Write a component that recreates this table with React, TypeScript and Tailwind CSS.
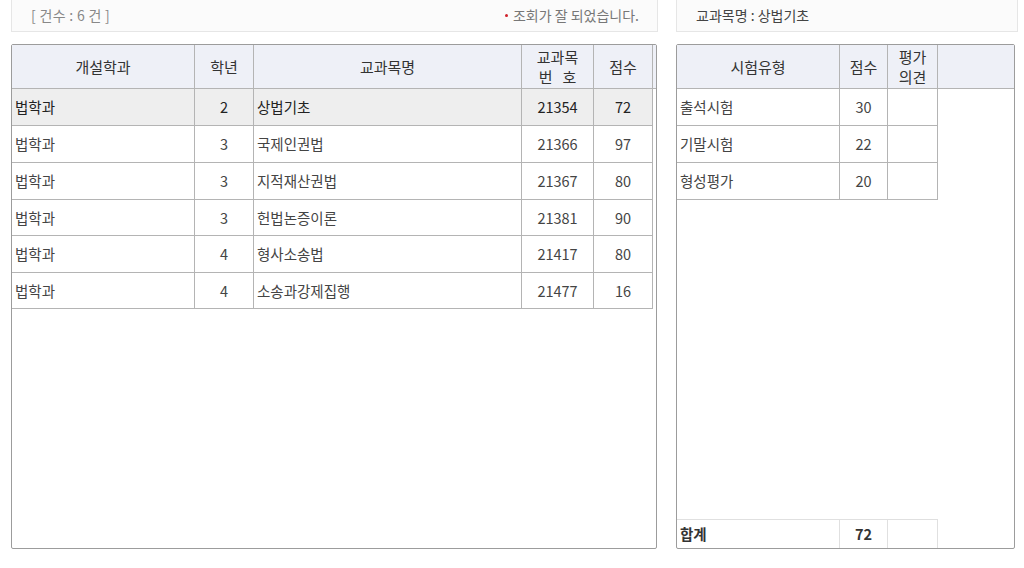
import React from "react";

const rows = [
  { dept: "법학과", grade: "2", name: "상법기초", code: "21354", score: "72", h: "h-[37px]" },
  { dept: "법학과", grade: "3", name: "국제인권법", code: "21366", score: "97", h: "h-[37px]" },
  { dept: "법학과", grade: "3", name: "지적재산권법", code: "21367", score: "80", h: "h-[37px]" },
  { dept: "법학과", grade: "3", name: "헌법논증이론", code: "21381", score: "90", h: "h-[36px]" },
  { dept: "법학과", grade: "4", name: "형사소송법", code: "21417", score: "80", h: "h-[37px]" },
  { dept: "법학과", grade: "4", name: "소송과강제집행", code: "21477", score: "16", h: "h-[36px]" },
];

const exams = [
  { type: "출석시험", score: "30" },
  { type: "기말시험", score: "22" },
  { type: "형성평가", score: "20" },
];

const hc = "flex items-center justify-center border-r border-b border-[#b4b4b4] bg-[#eef0f7] text-[15px] text-[#333] leading-[20px] text-center h-[44px]";
const cc = "flex items-center border-r border-b border-[#b4b4b4] text-[14.5px]";

export default function App() {
  return (
    <div
      className="w-[1024px] h-[568px] bg-white flex gap-[18px] pl-[11px]"
      style={{ fontFamily: '"Noto Sans CJK KR", "Noto Sans", sans-serif' }}
    >
      {/* left */}
      <div className="flex flex-col w-[647px]">
        <div className="h-[32px] border border-t-0 border-[#e6e6e6] bg-[#fbfbfb] flex items-center justify-between pl-[19px] pr-[18px] text-[14px] text-[#888]">
          <span className="tracking-[0.3px]">[ 건수 : 6 건 ]</span>
          <span className="flex items-center gap-[5px] text-[#777]">
            <span className="w-[3px] h-[3px] rounded-full bg-[#d0202a] inline-block" />
            조회가 잘 되었습니다.
          </span>
        </div>
        <div className="mt-[12px] w-[646px] h-[505px] border border-[#9c9c9c] rounded-[2px] flex">
          <div className="flex flex-col">
            <div className="grid grid-cols-[183px_59px_268px_72px_59px]">
              <div className={hc}>개설학과</div>
              <div className={hc}>학년</div>
              <div className={hc}>교과목명</div>
              <div className={hc + " flex-col"}>
                <span>교과목</span>
                <span>번&nbsp;&nbsp;&nbsp;호</span>
              </div>
              <div className={hc}>점수</div>
              {rows.map((r, i) => {
                const sel = i === 0;
                const bg = sel ? " bg-[#eeeeee] text-[#222]" : " bg-white text-[#444]";
                const c = cc + " " + r.h + bg;
                return (
                  <React.Fragment key={i}>
                    <div className={c + " pl-[3px]"}>{r.dept}</div>
                    <div className={c + " justify-center"}>{r.grade}</div>
                    <div className={c + " pl-[3px]"}>{r.name}</div>
                    <div className={c + " justify-center"}>{r.code}</div>
                    <div className={c + " justify-center"}>{r.score}</div>
                  </React.Fragment>
                );
              })}
            </div>
          </div>
          <div className="flex-1 flex flex-col">
            <div className="h-[44px] bg-[#eef0f7] border-b border-[#b4b4b4]" />
          </div>
        </div>
      </div>

      {/* right */}
      <div className="flex flex-col w-[342px]">
        <div className="h-[32px] border border-t-0 border-[#e6e6e6] bg-[#fbfbfb] flex items-center pl-[19px] text-[14px] text-[#444]">
          교과목명 : 상법기초
        </div>
        <div className="mt-[12px] w-[339px] h-[505px] border border-[#9c9c9c] rounded-[2px] flex flex-col">
          <div className="grid grid-cols-[163px_48px_50px_1fr]">
            <div className={hc}>시험유형</div>
            <div className={hc}>점수</div>
            <div className={hc + " flex-col"}>
              <span>평가</span>
              <span>의견</span>
            </div>
            <div className="h-[44px] bg-[#eef0f7] border-b border-[#b4b4b4]" />
          </div>
          <div className="grid grid-cols-[163px_48px_50px] w-[261px]">
            {exams.map((e, i) => (
              <React.Fragment key={i}>
                <div className={cc + " h-[37px] pl-[3px] text-[#444]"}>{e.type}</div>
                <div className={cc + " h-[37px] justify-center text-[#444]"}>{e.score}</div>
                <div className={cc + " h-[37px]"} />
              </React.Fragment>
            ))}
          </div>
          <div className="flex-1" />
          <div className="grid grid-cols-[163px_48px_50px] w-[261px] border-t border-[#e0e0e0] h-[29px]">
            <div className="flex items-center pl-[3px] text-[14.5px] font-bold text-[#333] border-r border-[#e0e0e0]">합계</div>
            <div className="flex items-center justify-center text-[14.5px] font-bold text-[#333] border-r border-[#e0e0e0]">72</div>
            <div className="border-r border-[#e0e0e0]" />
          </div>
        </div>
      </div>
    </div>
  );
}
